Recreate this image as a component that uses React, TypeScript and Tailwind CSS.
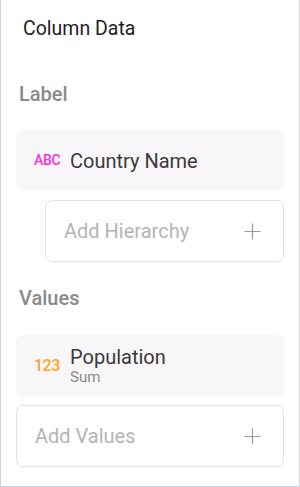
import React from "react";

function Plus() {
  return (
    <svg width="17" height="17" viewBox="0 0 17 17" className="shrink-0">
      <path d="M8.5 0.5V16.5M0.5 8.5H16.5" stroke="#9a9a9a" strokeWidth="1.2" />
    </svg>
  );
}

export default function App() {
  return (
    <div
      className="w-[300px] h-[487px] bg-white border-l border-r border-b border-[#c9d5e1] flex flex-col"
      style={{ fontFamily: "Roboto, 'Noto Sans', sans-serif" }}
    >
      <div className="pl-[22px] pt-[17px] text-[19.5px] leading-[24px] text-[#1e1e1e]">Column Data</div>
      <div className="pl-[18px] pt-[41px] text-[20px] leading-[24px] font-medium text-[#8a8a8a]">Label</div>
      <div className="mx-[15px] mt-[24px] h-[61px] rounded-[6px] bg-[#f8f6f9] flex items-center pl-[18px]">
        <span className="text-[14px] text-[#ff2ee0] w-[36px] font-medium tracking-[-0.3px]">ABC</span>
        <span className="text-[20px] text-[#3a3a3a]">Country Name</span>
      </div>
      <div className="ml-[44px] mr-[15px] mt-[9px] h-[62px] rounded-[7px] border border-[#e4e2e5] flex items-center justify-between pl-[18px] pr-[22px]">
        <span className="text-[20px] text-[#b4b4b4]">Add Hierarchy</span>
        <Plus />
      </div>
      <div className="pl-[18px] pt-[24px] text-[20px] leading-[24px] font-medium text-[#8a8a8a]">Values</div>
      <div className="mx-[15px] mt-[25px] h-[62px] rounded-[6px] bg-[#f8f6f9] flex items-center pl-[18px]">
        <span className="text-[16px] text-[#ffa41c] w-[36px] font-medium tracking-[-0.5px]">123</span>
        <div className="flex flex-col">
          <span className="text-[20px] leading-[23px] text-[#3a3a3a]">Population</span>
          <span className="text-[15px] leading-[17px] text-[#8a8a8a]">Sum</span>
        </div>
      </div>
      <div className="mx-[15px] mt-[8px] h-[62px] rounded-[7px] border border-[#e4e2e5] flex items-center justify-between pl-[18px] pr-[22px]">
        <span className="text-[20px] text-[#b4b4b4]">Add Values</span>
        <Plus />
      </div>
    </div>
  );
}
